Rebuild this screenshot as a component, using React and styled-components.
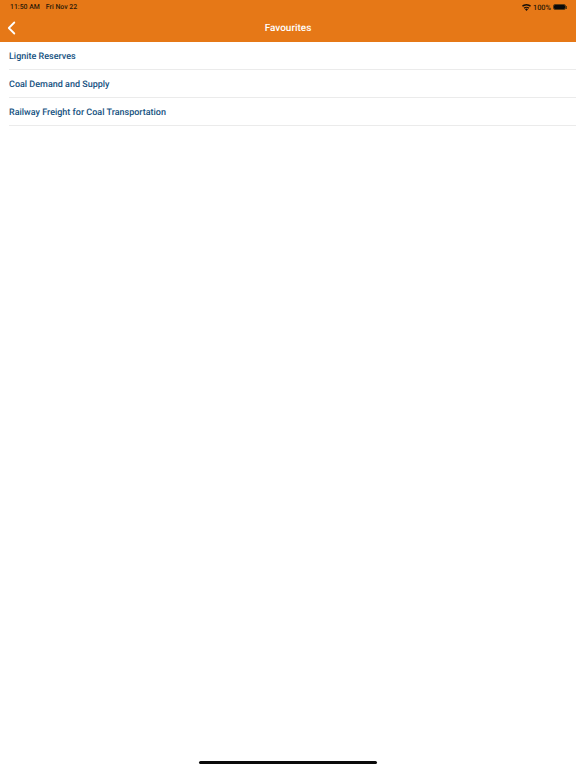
import React from "react";
import styled, { createGlobalStyle } from "styled-components";

const GlobalStyle = createGlobalStyle`
  html, body {
    margin: 0;
    padding: 0;
    background: #fff;
    font-family: Roboto, "Liberation Sans", sans-serif;
    text-rendering: geometricPrecision;
  }
`;

const Page = styled.div`
  position: relative;
  width: 576px;
  height: 768px;
  overflow: hidden;
  background: #fff;
`;

const Header = styled.header`
  background: #e67817;
  height: 42px;
  display: flex;
  flex-direction: column;
`;

const StatusBar = styled.div`
  height: 14px;
  padding: 0 10px;
  display: flex;
  align-items: center;
  justify-content: space-between;
  color: #2b1a08;
  font-weight: 500;
`;

const StatusGroup = styled.div`
  display: flex;
  align-items: center;
  gap: ${(props) => props.$gap}px;
  font-size: ${(props) => props.$size}px;
`;

const NavBar = styled.div`
  flex: 1;
  padding-top: 1px;
  position: relative;
  display: flex;
  align-items: center;
  justify-content: center;
`;

const Title = styled.h1`
  margin: 0;
  color: #fff;
  font-size: 10px;
  font-weight: 500;
`;

const BackButton = styled.button`
  position: absolute;
  left: 6px;
  top: 6px;
  padding: 0;
  border: 0;
  background: none;
  display: flex;
`;

const List = styled.ul`
  list-style: none;
  margin: 0;
  padding: 0;
`;

const Row = styled.li`
  box-sizing: border-box;
  height: 28px;
  padding-top: 2px;
  margin-left: 9px;
  border-bottom: 1px solid #ebebeb;
  display: flex;
  align-items: center;
  color: #16527f;
  font-size: 9px;
  font-weight: 500;
`;

const HomeBar = styled.div`
  position: absolute;
  left: 199px;
  bottom: 4px;
  width: 178px;
  height: 3px;
  border-radius: 2px;
  background: #0a0a0a;
`;

const Battery = styled.div`
  position: relative;
  width: 13px;
  height: 6px;
  box-sizing: border-box;
  border: 0.5px solid #5c3a10;
  border-radius: 2px;
  &::before {
    content: "";
    display: block;
    height: 100%;
    background: #0a0a0a;
    border-radius: 1px;
  }
  &::after {
    content: "";
    position: absolute;
    right: -1.5px;
    top: 1.25px;
    width: 1px;
    height: 2.5px;
    background: #5c3a10;
  }
`;

const favourites = [
  "Lignite Reserves",
  "Coal Demand and Supply",
  "Railway Freight for Coal Transportation",
];

export default function App() {
  return (
    <Page>
      <GlobalStyle />
      <Header>
        <StatusBar>
          <StatusGroup $gap={6} $size={6.9}>
            <span>11:50 AM</span>
            <span>Fri Nov 22</span>
          </StatusGroup>
          <StatusGroup $gap={2} $size={7.4}>
            <svg width="9" height="7" viewBox="0 0 18 14" fill="#1a1008">
              <path d="M9 14 6 10.6a4.4 4.4 0 0 1 6 0Z" />
              <path d="M9 5.4c2.2 0 4.2.8 5.700 2.200l-1.700 1.900a6 6 0 0 0-8 0L3.300 7.600A8.500 8.500 0 0 1 9 5.400Z" />
              <path d="M9 0c3.700 0 7 1.400 9 3.700l-1.800 2A11 11 0 0 0 9 2.800a11 11 0 0 0-7.200 2.900L0 3.700C2 1.400 5.300 0 9 0Z" />
            </svg>
            <span>100%</span>
            <Battery />
          </StatusGroup>
        </StatusBar>
        <NavBar>
          <Title>Favourites</Title>
          <BackButton aria-label="Back">
            <svg width="10" height="16" viewBox="0 0 10 16" fill="none" stroke="#fff" strokeWidth="1.800" strokeLinecap="round" strokeLinejoin="round">
              <path d="M8.300 2.500 2.800 8l5.500 5.500" />
            </svg>
          </BackButton>
        </NavBar>
      </Header>
      <List>
        {favourites.map((name) => (
          <Row key={name}>{name}</Row>
        ))}
      </List>
      <HomeBar />
    </Page>
  );
}
